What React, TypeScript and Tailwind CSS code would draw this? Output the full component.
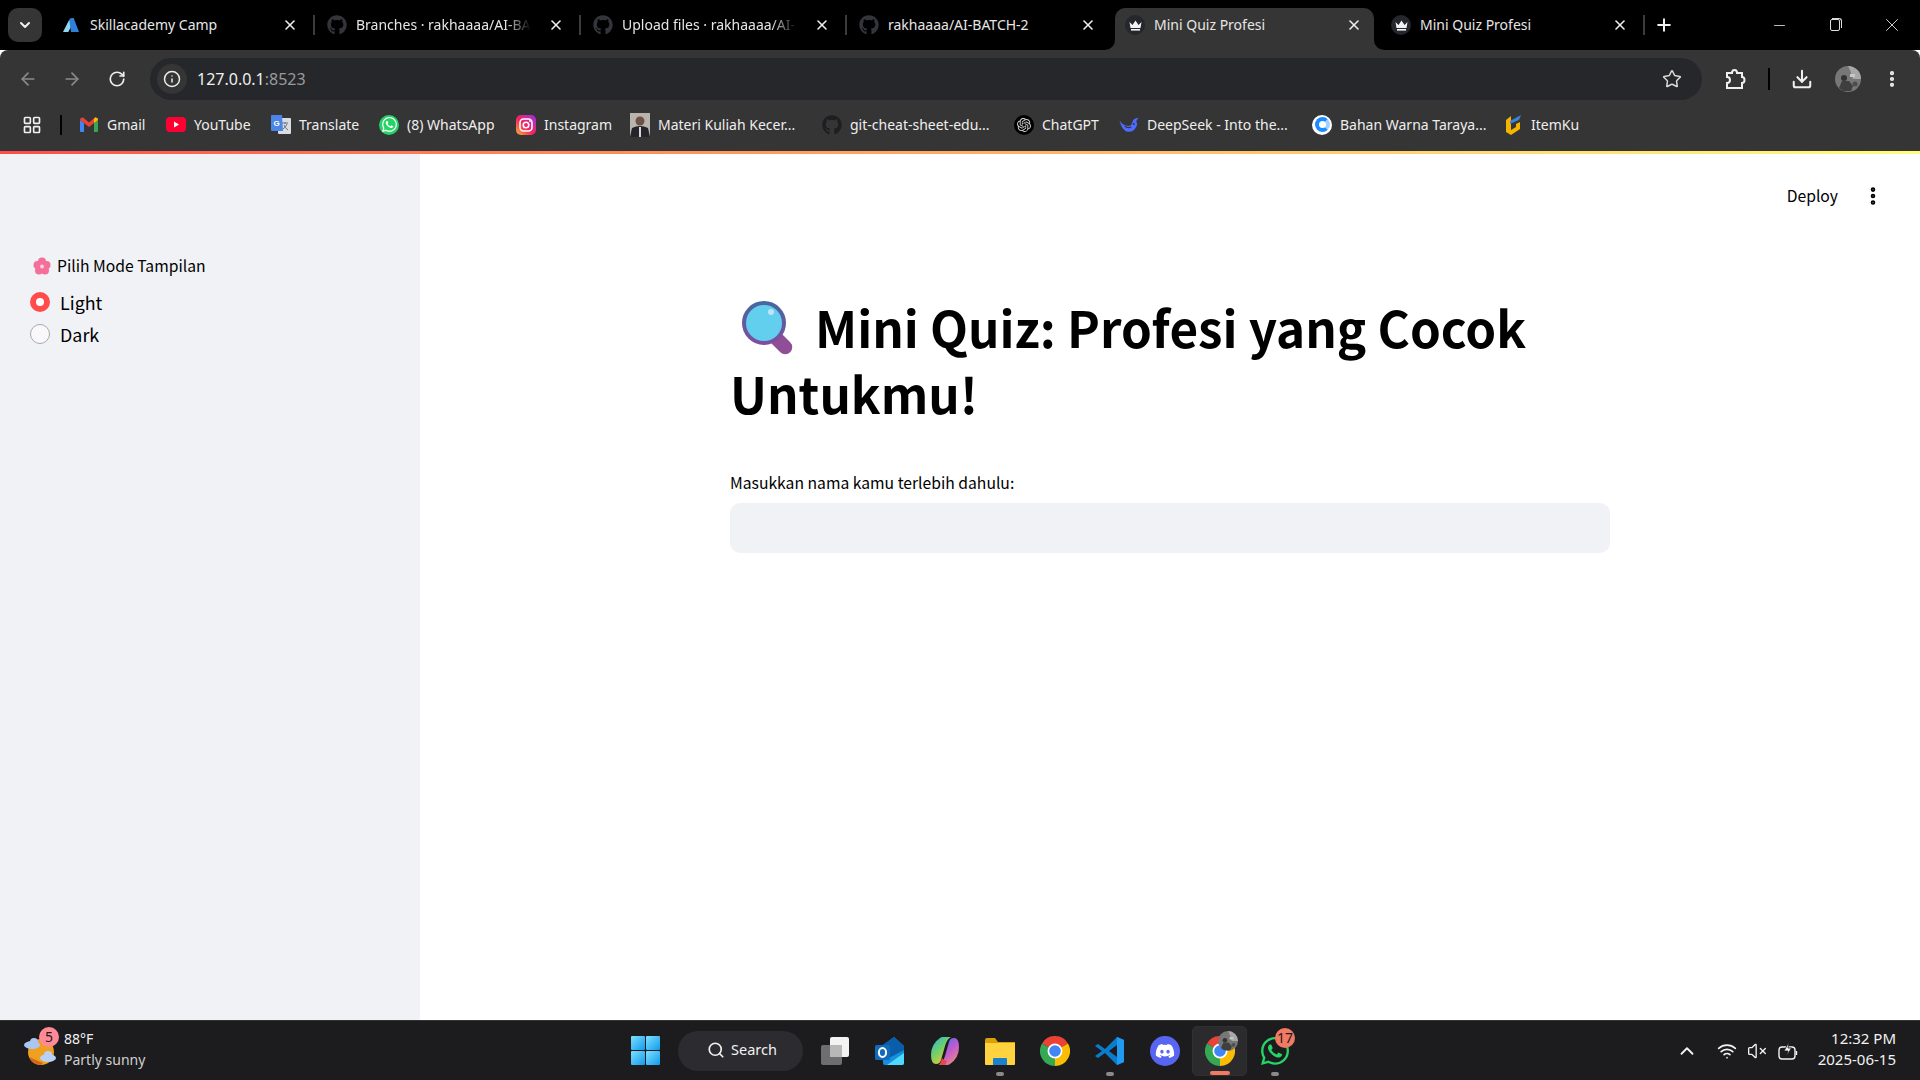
import { ArrowLeft, ArrowRight, ChevronDown, ChevronUp, Download, EllipsisVertical, Info, LayoutGrid, Minus, Plus, RotateCw, Search, Star, VolumeX, Wifi, X } from 'lucide-react';
import { FaDiscord, FaGithub, FaWhatsapp } from 'react-icons/fa';
import { SiOpenai } from 'react-icons/si';
import type { ReactNode } from 'react';

// small drawn logos
function SkillLogo() {
  return (
    <svg width="18" height="16" viewBox="0 0 18 16">
      <path d="M0 16 L7 2 L10 8 L6 16 Z" fill="#8fd8ee" />
      <path d="M7 2 Q8 0 10 0 L12 0 L18 16 L9 16 Z" fill="#2f80d8" />
    </svg>
  );
}

function CrownIcon() {
  return (
    <span className="flex h-[20px] w-[20px] shrink-0 items-center justify-center rounded-full bg-[#25262e]">
      <svg width="13" height="11" viewBox="0 0 13 11">
        <path d="M0.5 2 L3.5 5 L6.5 0.5 L9.5 5 L12.5 2 L11.5 8 L1.5 8 Z" fill="#f2f2f2" />
        <rect x="2" y="9" width="9" height="1.6" fill="#f2f2f2" />
      </svg>
    </span>
  );
}

function GithubTab() {
  return <FaGithub size={20} color="#33353a" className="shrink-0" />;
}

function GithubBookmark() {
  return <FaGithub size={20} color="#1d1e21" className="shrink-0" />;
}

function GmailIcon() {
  return (
    <svg width="18" height="15" viewBox="0 0 18 15">
      <path d="M0 3 L4 6 L4 15 L1 15 Q0 15 0 14 Z" fill="#4285f4" />
      <path d="M18 3 L14 6 L14 15 L17 15 Q18 15 18 14 Z" fill="#34a853" />
      <path d="M0 3 Q0 0 3 0.6 L9 5.5 L15 0.6 Q18 0 18 3 L14 6 L9 10 L4 6 Z" fill="#ea4335" />
      <path d="M14 1.8 L15 0.6 Q18 0 18 3 L14 6 Z" fill="#fbbc04" />
    </svg>
  );
}

function YoutubeIcon() {
  return (
    <svg width="20" height="15" viewBox="0 0 20 15">
      <rect width="20" height="15" rx="4" fill="#ff0033" />
      <path d="M8 4.5 L13 7.5 L8 10.5 Z" fill="#fff" />
    </svg>
  );
}

function TranslateIcon() {
  return (
    <svg width="20" height="20" viewBox="0 0 20 20">
      <rect x="7" y="3" width="13" height="16" rx="1" fill="#d9dde3" />
      <path d="M11 8 H17 M14 7 V9 M12 14 Q15 12 16 9 M13 10 Q14 13 17 15" stroke="#6b7280" strokeWidth="1" fill="none" />
      <path d="M1 0 H11 L12 16 H1 Q0 16 0 15 V1 Q0 0 1 0 Z" fill="#4a86e8" />
      <text x="2.5" y="11" fontSize="8" fontWeight="700" fill="#fff" fontFamily="Liberation Sans, sans-serif">G</text>
    </svg>
  );
}

function WhatsappBookmark() {
  return (
    <span className="flex h-[20px] w-[20px] items-center justify-center rounded-full bg-[#25d366]">
      <FaWhatsapp size={17} color="#fff" />
    </span>
  );
}

function InstagramIcon() {
  return (
    <svg width="20" height="20" viewBox="0 0 20 20">
      <defs>
        <linearGradient id="ig" x1="0" y1="1" x2="1" y2="0">
          <stop offset="0" stopColor="#fdb331" />
          <stop offset="0.45" stopColor="#f4245e" />
          <stop offset="1" stopColor="#9b30e8" />
        </linearGradient>
      </defs>
      <rect width="20" height="20" rx="5" fill="url(#ig)" />
      <rect x="4" y="4" width="12" height="12" rx="3.5" fill="none" stroke="#fff" strokeWidth="1.6" />
      <circle cx="10" cy="10" r="2.8" fill="none" stroke="#fff" strokeWidth="1.6" />
      <circle cx="14" cy="6" r="0.9" fill="#fff" />
    </svg>
  );
}

function PersonThumb() {
  return (
    <svg width="20" height="24" viewBox="0 0 20 24">
      <rect width="20" height="24" fill="#b9b5ae" />
      <circle cx="10" cy="8" r="4.5" fill="#6d5246" />
      <path d="M0 24 L2 15 Q10 11 18 15 L20 24 Z" fill="#23252a" />
      <path d="M9 14 L11 14 L11 24 L9 24 Z" fill="#d8d8d8" />
    </svg>
  );
}

function ChatgptIcon() {
  return (
    <span className="flex h-[20px] w-[20px] items-center justify-center rounded-full bg-black">
      <SiOpenai size={14} color="#d8d8d8" />
    </span>
  );
}

function DeepseekIcon() {
  return (
    <svg width="21" height="16" viewBox="0 0 21 16">
      <path d="M0.5 3 Q4 9 10 9 Q13 9 14 5 Q15 1 20.5 0.5 L18 4 Q20 7 18 10 Q15 16 9 15 Q3 14 0.5 3 Z" fill="#4d6bfe" />
      <path d="M6 9 Q9 12 13 10" stroke="#353535" strokeWidth="1.2" fill="none" />
      <circle cx="15.5" cy="7" r="1" fill="#353535" />
    </svg>
  );
}

function BahanIcon() {
  return (
    <span className="flex h-[20px] w-[20px] items-center justify-center rounded-full bg-white">
      <span className="h-[15px] w-[15px] rounded-full border-[4px] border-[#1a8cff] border-r-[#9fd0ff]" />
    </span>
  );
}

function ItemkuIcon() {
  return (
    <svg width="16" height="22" viewBox="0 0 16 22">
      <path d="M1 6 L6 2 L6 16 L11 13 L11 10 L15 8 L15 15 L6 21 L1 18 Z" fill="#f4b400" />
      <path d="M5 7 L16 1 L14 6 L5 10 Z" fill="#3b82d6" />
    </svg>
  );
}

// grey profile photo, used in the toolbar and on the taskbar
function Avatar({ w, h }: { w: number; h: number }) {
  return (
    <svg width={w} height={h} viewBox="0 0 26 26">
      <circle cx="13" cy="13" r="13" fill="#777777" />
      <path d="M13 0 A13 13 0 0 1 26 13 L18 13 L15 4 Z" fill="#a8a8a8" />
      <circle cx="9" cy="12" r="3" fill="#333333" />
      <path d="M4 22 L7 15 L14 15 L18 20 L16 25 L8 25 Z" fill="#3f3f3f" />
      <rect x="15" y="8" width="5" height="3" fill="#c8c8c8" />
      <circle cx="20" cy="18" r="2.5" fill="#4d4d4d" />
    </svg>
  );
}

function WeatherIcon() {
  return (
    <svg width="36" height="36" viewBox="0 0 36 36">
      <circle cx="18" cy="19" r="13" fill="#f0a020" />
      <path d="M18 32 A13 13 0 0 1 6 24 L20 30 Z" fill="#d4661a" />
      <ellipse cx="9" cy="12" rx="8" ry="4" fill="#a9c7f2" />
      <circle cx="11" cy="9" r="4" fill="#a9c7f2" />
      <ellipse cx="25" cy="25" rx="8" ry="4" fill="#b7d2f7" />
      <circle cx="25" cy="22" r="4" fill="#b7d2f7" />
    </svg>
  );
}

function WindowsIcon() {
  return (
    <svg width="29" height="29" viewBox="0 0 29 29">
      <defs>
        <linearGradient id="win" x1="0" y1="0" x2="1" y2="1">
          <stop offset="0" stopColor="#7fe0ff" />
          <stop offset="1" stopColor="#0f9bea" />
        </linearGradient>
      </defs>
      <rect width="14" height="14" rx="1" fill="url(#win)" />
      <rect x="15" width="14" height="14" rx="1" fill="url(#win)" />
      <rect y="15" width="14" height="14" rx="1" fill="url(#win)" />
      <rect x="15" y="15" width="14" height="14" rx="1" fill="url(#win)" />
    </svg>
  );
}

function TaskViewIcon() {
  return (
    <svg width="30" height="30" viewBox="0 0 30 30">
      <rect x="10" y="1" width="19" height="20" rx="2" fill="#f2f2f2" />
      <rect x="1" y="9" width="21" height="20" rx="2" fill="#6e6e6e" />
      <rect x="10" y="9" width="12" height="12" fill="#b8b8b8" />
    </svg>
  );
}

function OutlookIcon() {
  return (
    <svg width="30" height="30" viewBox="0 0 30 30">
      <path d="M8 9 L19 1 L29 10 L29 27 Q29 29 27 29 L10 29 Q8 29 8 27 Z" fill="#1490df" />
      <path d="M19 1 L29 10 L29 14 L14 22 L8 18 L8 9 Z" fill="#0a5da8" />
      <path d="M12 29 L29 17 L29 27 Q29 29 27 29 Z" fill="#50d9ff" />
      <rect x="0" y="9" width="15" height="15" rx="1.5" fill="#0f6cbd" />
      <ellipse cx="7.5" cy="16.5" rx="3.6" ry="4.4" fill="none" stroke="#fff" strokeWidth="2" />
    </svg>
  );
}

function CopilotIcon() {
  return (
    <svg width="30" height="30" viewBox="0 0 30 30">
      <defs>
        <linearGradient id="cpa" x1="0" y1="0" x2="0.7" y2="1">
          <stop offset="0" stopColor="#25b4e8" />
          <stop offset="0.5" stopColor="#6fd06a" />
          <stop offset="1" stopColor="#f6c42c" />
        </linearGradient>
        <linearGradient id="cpb" x1="0.3" y1="0" x2="1" y2="1">
          <stop offset="0" stopColor="#5a6be8" />
          <stop offset="0.45" stopColor="#c35bd0" />
          <stop offset="1" stopColor="#f79a60" />
        </linearGradient>
      </defs>
      <path d="M10 2 Q11 1 13 1 L21 1 Q17 3 15 10 L11 24 Q10 28 6 28 Q1 28 1 19 Q1 8 10 2 Z" fill="url(#cpa)" />
      <path d="M20 28 Q19 29 17 29 L9 29 Q13 27 15 20 L19 6 Q20 2 24 2 Q29 2 29 11 Q29 22 20 28 Z" fill="url(#cpb)" />
      <path d="M12 22 Q14 25 17 25 L15 29 L9 29 Q11 27 12 22 Z" fill="#e8464e" />
    </svg>
  );
}

function FolderIcon() {
  return (
    <svg width="30" height="30" viewBox="0 0 30 30">
      <path d="M0 4 Q0 2 2 2 L10 2 L13 6 L30 6 L30 12 L0 12 Z" fill="#d9a008" />
      <path d="M0 7 L30 7 L30 28 Q30 29 29 29 L1 29 Q0 29 0 28 Z" fill="#ffd23f" />
      <path d="M9 22 H21 Q22 22 22 23 V29 H8 V23 Q8 22 9 22 Z" fill="#1a80d0" />
    </svg>
  );
}

function ChromeIcon() {
  return (
    <svg width="30" height="30" viewBox="0 0 30 30">
      <path d="M15 15 L2 7.5 A15 15 0 0 1 28 7.5 Z" fill="#ea4335" />
      <path d="M15 15 L28 7.5 A15 15 0 0 1 15 30 Z" fill="#fbbc04" />
      <path d="M15 15 L15 30 A15 15 0 0 1 2 7.5 Z" fill="#34a853" />
      <circle cx="15" cy="15" r="7.5" fill="#fff" />
      <circle cx="15" cy="15" r="5.8" fill="#4285f4" />
    </svg>
  );
}

function VscodeIcon() {
  return (
    <svg width="30" height="30" viewBox="0 0 30 30">
      <path d="M22 1 L29 4 L29 26 L22 29 L10 17 L3 22 L0 20 L7 15 L0 10 L3 8 L10 13 Z" fill="#0a7ccb" />
      <path d="M22 1 L29 4 L29 26 L22 29 Z" fill="#1f9cf0" />
      <path d="M22 9 L14 15 L22 21 Z" fill="#1c1c1f" />
    </svg>
  );
}

function DiscordIcon() {
  return (
    <span className="flex h-[30px] w-[30px] items-center justify-center rounded-full bg-[#5865f2]">
      <FaDiscord size={20} color="#fff" />
    </span>
  );
}

function BatteryIcon() {
  return (
    <svg width="20" height="20" viewBox="0 0 20 20" fill="none" stroke="#f2f2f2" strokeWidth="1.4">
      <rect x="1" y="6" width="16" height="12" rx="3" />
      <path d="M18.5 10 V14" />
      <path d="M11 1 L6 10 H10 L8.5 15 L13.5 7 H10 Z" fill="#f2f2f2" stroke="#1c1c1f" strokeWidth="0.8" />
    </svg>
  );
}

function MagnifierEmoji() {
  return (
    <svg width="58" height="56" viewBox="0 0 58 56">
      <defs>
        <linearGradient id="ring" x1="0" y1="0" x2="0" y2="1">
          <stop offset="0" stopColor="#47689e" />
          <stop offset="1" stopColor="#7d4ea0" />
        </linearGradient>
      </defs>
      <rect x="33" y="30" width="14" height="26" rx="7" transform="rotate(-45 40 43)" fill="#8f4f97" />
      <circle cx="23" cy="23" r="20" fill="#62cfee" stroke="url(#ring)" strokeWidth="4" />
      <circle cx="30" cy="12" r="3" fill="#bfe4f5" />
    </svg>
  );
}

type Tab = { title: string; icon: ReactNode; fade?: boolean; active?: boolean; sep?: boolean };

const tabs: Tab[] = [
  { title: 'Skillacademy Camp', icon: <SkillLogo />, sep: true },
  { title: 'Branches · rakhaaaa/AI-BA', icon: <GithubTab />, fade: true, sep: true },
  { title: 'Upload files · rakhaaaa/AI-', icon: <GithubTab />, fade: true, sep: true },
  { title: 'rakhaaaa/AI-BATCH-2', icon: <GithubTab /> },
  { title: 'Mini Quiz Profesi', icon: <CrownIcon />, active: true },
  { title: 'Mini Quiz Profesi', icon: <CrownIcon />, sep: true },
];

const bookmarks = [
  { label: 'Gmail', icon: <GmailIcon />, width: 'w-[87px]' },
  { label: 'YouTube', icon: <YoutubeIcon />, width: 'w-[105px]' },
  { label: 'Translate', icon: <TranslateIcon />, width: 'w-[108px]' },
  { label: '(8) WhatsApp', icon: <WhatsappBookmark />, width: 'w-[137px]' },
  { label: 'Instagram', icon: <InstagramIcon />, width: 'w-[114px]' },
  { label: 'Materi Kuliah Kecer...', icon: <PersonThumb />, width: 'w-[192px]' },
  { label: 'git-cheat-sheet-edu...', icon: <GithubBookmark />, width: 'w-[192px]' },
  { label: 'ChatGPT', icon: <ChatgptIcon />, width: 'w-[105px]' },
  { label: 'DeepSeek - Into the...', icon: <DeepseekIcon />, width: 'w-[193px]' },
  { label: 'Bahan Warna Taraya...', icon: <BahanIcon />, width: 'w-[191px]' },
  { label: 'ItemKu', icon: <ItemkuIcon />, width: 'w-[90px]' },
];

function TabItem({ tab }: { tab: Tab }) {
  return (
    <div className="relative flex h-[42px] w-[266px] items-center pb-[8px] pl-[8px]">
      {tab.active && (
        <span className="absolute bottom-0 left-[-4px] top-0 w-[259px] rounded-t-[10px] bg-[#353535]">
          <span className="absolute bottom-0 left-[-10px] h-[10px] w-[10px] bg-[#353535]">
            <span className="block h-full w-full rounded-br-[10px] bg-black" />
          </span>
          <span className="absolute bottom-0 right-[-10px] h-[10px] w-[10px] bg-[#353535]">
            <span className="block h-full w-full rounded-bl-[10px] bg-black" />
          </span>
        </span>
      )}
      <span className="relative flex w-[16px] shrink-0 items-center justify-center">{tab.icon}</span>
      <span className={`relative ml-[11px] w-[175px] overflow-hidden whitespace-nowrap text-[14px] leading-[20px] text-[#e6e6e6] ${tab.fade ? '[mask-image:linear-gradient(90deg,#000_85%,transparent)]' : ''}`}>
        {tab.title}
      </span>
      <span className="relative ml-[16px] flex w-[18px] justify-center">
        <X size={16} strokeWidth={2.4} color="#eeeeee" />
      </span>
      {tab.sep && <span className="ml-[14px] h-[20px] w-[2px] bg-[#3c3c3c]" />}
    </div>
  );
}

function TaskbarItem({ children, state }: { children: ReactNode; state?: 'open' | 'active' }) {
  return (
    <div className={`relative flex h-[50px] w-[55px] items-center justify-center rounded-[5px] ${state === 'active' ? 'border border-[#303033] bg-[#2b2b2e]' : ''}`}>
      {children}
      {state === 'open' && <span className="absolute bottom-[0px] h-[4px] w-[8px] rounded-full bg-[#8a8a8a]" />}
      {state === 'active' && <span className="absolute bottom-[0px] h-[4px] w-[20px] rounded-full bg-[#f27a63]" />}
    </div>
  );
}

export default function App() {
  return (
    <div className="flex h-[1080px] w-[1920px] flex-col overflow-hidden bg-white font-['Noto_Sans',sans-serif]">
      {/* tab strip */}
      <div className="flex h-[50px] items-end bg-black">
        <div className="mb-[8px] ml-[8px] flex h-[34px] w-[34px] items-center justify-center rounded-[10px] bg-[#353535]">
          <ChevronDown size={16} strokeWidth={3} color="#f0f0f0" />
        </div>
        <div className="ml-[13px] flex">
          {tabs.map((tab, i) => (
            <TabItem key={i} tab={tab} />
          ))}
        </div>
        <div className="mb-[12px] ml-[3px] flex h-[26px] items-center">
          <Plus size={20} strokeWidth={2.4} color="#f2f2f2" />
        </div>
        <div className="ml-auto flex h-full items-center text-[#dddddd]">
          <span className="flex w-[56px] justify-center"><Minus size={17} strokeWidth={1.2} /></span>
          <span className="relative flex h-[14px] w-[56px] items-center justify-center">
            <span className="h-[12px] w-[10px] rounded-[2px] border border-[#dddddd]" />
            <span className="absolute left-[25px] top-[0px] h-[10px] w-[10px] rounded-tr-[3px] border-r border-t border-[#dddddd]" />
          </span>
          <span className="flex w-[57px] justify-center"><X size={22} strokeWidth={1} /></span>
        </div>
      </div>

      {/* toolbar */}
      <div className="flex h-[50px] items-start rounded-t-[8px] bg-[#353535] pt-[8px]">
        <div className="flex h-[42px] w-[150px] items-center pl-[18px]">
          <ArrowLeft size={20} color="#8b8b8b" />
          <span className="ml-[24px]"><ArrowRight size={20} color="#8b8b8b" /></span>
          <span className="ml-[26px]"><RotateCw size={18} strokeWidth={2.2} color="#eeeeee" /></span>
        </div>
        <div className="flex h-[42px] w-[1552px] items-center rounded-full bg-[#26272a] pl-[7px] pr-[20px]">
          <span className="flex h-[30px] w-[30px] items-center justify-center rounded-full bg-[#353535]">
            <Info size={18} color="#eeeeee" />
          </span>
          <span className="ml-[10px] text-[16px] text-[#f0f0f0]">127.0.0.1<span className="text-[#9a9a9a]">:8523</span></span>
          <span className="ml-auto"><Star size={20} strokeWidth={1.8} color="#d8d8d8" /></span>
        </div>
        <div className="flex h-[42px] flex-1 items-center pl-[22px]">
          <svg width="22" height="22" viewBox="0 0 22 22" fill="none" stroke="#f0f0f0" strokeWidth="2">
            <path d="M3 5 H8 Q8 2 10.5 2 Q13 2 13 5 H18 V9 Q20.5 9 20.5 12 Q20.5 15 18 15 V20 H3 V15 Q6 15 6 12 Q6 9 3 9 Z" />
          </svg>
          <span className="ml-[22px] h-[22px] w-[2px] bg-black" />
          <span className="ml-[21px]"><Download size={22} strokeWidth={2.2} color="#f0f0f0" /></span>
          <span className="ml-[22px] flex"><Avatar w={26} h={26} /></span>
          <span className="ml-[21px]"><EllipsisVertical size={20} strokeWidth={3} color="#f0f0f0" /></span>
        </div>
      </div>

      {/* bookmarks */}
      <div className="flex h-[51px] items-center bg-[#353535] pb-[2px] pl-[22px]">
        <LayoutGrid size={20} strokeWidth={2} color="#f0f0f0" />
        <span className="ml-[18px] h-[20px] w-[2px] bg-black" />
        <div className="ml-[17px] flex">
          {bookmarks.map((b) => (
            <div key={b.label} className={`flex items-center ${b.width}`}>
              <span className="flex w-[20px] justify-center">{b.icon}</span>
              <span className="ml-[8px] whitespace-nowrap text-[14px] leading-[20px] text-[#eeeeee]">{b.label}</span>
            </div>
          ))}
        </div>
      </div>

      {/* streamlit decoration */}
      <div className="h-[3px] bg-gradient-to-r from-[#ff4b4b] to-[#fffd80]" />

      <div className="flex min-h-0 flex-1 font-['Noto_Sans_CJK_SC',sans-serif] text-black">
        <aside className="w-[420px] bg-[#f0f2f6] pl-[30px] pt-[100px]">
          <div className="flex items-center text-[15.7px] leading-[24px]">
            <svg width="18" height="18" viewBox="0 0 18 18" className="ml-[3px] mr-[6px]">
              <g fill="#f4709a">
                <circle cx="9" cy="4.5" r="4" />
                <circle cx="13.5" cy="8" r="4" />
                <circle cx="12" cy="13.5" r="4" />
                <circle cx="6" cy="13.5" r="4" />
                <circle cx="4.5" cy="8" r="4" />
              </g>
              <circle cx="9" cy="9.5" r="2" fill="#fbd0df" />
            </svg>
            <span>Pilih Mode Tampilan</span>
          </div>
          <div className="mt-[8px] flex h-[32px] items-center text-[17.9px]">
            <span className="flex h-[20px] w-[20px] items-center justify-center rounded-full bg-[#ff4b4b]">
              <span className="h-[8px] w-[8px] rounded-full bg-white" />
            </span>
            <span className="ml-[10px]">Light</span>
          </div>
          <div className="flex h-[32px] items-center text-[17.9px]">
            <span className="h-[20px] w-[20px] rounded-full border border-[#a8a8ae] bg-[#f9f9fc]" />
            <span className="ml-[10px]">Dark</span>
          </div>
        </aside>

        <main className="min-w-0 flex-1">
          <div className="flex h-[84px] items-center justify-end pr-[35px]">
            <span className="text-[15.7px]">Deploy</span>
            <span className="ml-[23px] flex w-[24px] justify-center">
              <EllipsisVertical size={22} strokeWidth={3} color="#000000" />
            </span>
          </div>
          <div className="ml-[310px] w-[880px] pt-[56px]">
            <h1 className="text-[49.4px] font-bold leading-[66px] tracking-[0]">
              <span className="mr-[16px] inline-block pl-[11px] align-[-8px]"><MagnifierEmoji /></span>
              Mini Quiz: Profesi yang Cocok Untukmu!
            </h1>
            <p className="mt-[45px] text-[15.7px] leading-[24px]">Masukkan nama kamu terlebih dahulu:</p>
            <div className="mt-[8px] h-[50px] rounded-[10px] bg-[#f0f2f6]" />
          </div>
        </main>
      </div>

      {/* windows taskbar */}
      <div className="flex h-[60px] items-center border-t border-[#333333] bg-[#1c1c1f] text-[#f2f2f2]">
        <div className="flex w-[618px] items-center pl-[23px]">
          <div className="relative h-[36px] w-[36px]">
            <WeatherIcon />
            <span className="absolute left-[16px] top-[-6px] flex h-[20px] w-[20px] items-center justify-center rounded-full bg-[#ff8a95] text-[14px] text-[#1c1c1f]">5</span>
          </div>
          <div className="ml-[5px] pb-[3px] text-[14px] leading-[21px]">
            <div>88°F</div>
            <div className="text-[#d0d0d0]">Partly sunny</div>
          </div>
        </div>
        <div className="flex w-[55px] justify-center"><WindowsIcon /></div>
        <div className="ml-[5px] flex h-[40px] w-[125px] items-center rounded-full bg-[#2c2c30] pb-[1px] pl-[29px]">
          <Search size={18} strokeWidth={2.2} color="#f2f2f2" />
          <span className="ml-[6px] text-[14.5px]">Search</span>
        </div>
        <div className="ml-[4px] flex items-center">
          <TaskbarItem><TaskViewIcon /></TaskbarItem>
          <TaskbarItem><OutlookIcon /></TaskbarItem>
          <TaskbarItem><CopilotIcon /></TaskbarItem>
          <TaskbarItem state="open"><FolderIcon /></TaskbarItem>
          <TaskbarItem><ChromeIcon /></TaskbarItem>
          <TaskbarItem state="open"><VscodeIcon /></TaskbarItem>
          <TaskbarItem><DiscordIcon /></TaskbarItem>
          <TaskbarItem state="active">
            <ChromeIcon />
            <span className="absolute right-[8px] top-[3px] flex"><Avatar w={20} h={22} /></span>
          </TaskbarItem>
          <TaskbarItem state="open">
            <FaWhatsapp size={32} color="#25d366" />
            <span className="absolute right-[7px] top-[2px] flex h-[20px] w-[20px] items-center justify-center rounded-full bg-[#f27a63] text-[14px] text-[#1c1c1f]">17</span>
          </TaskbarItem>
        </div>
        <div className="ml-auto flex items-center pr-[24px]">
          <span className="flex w-[30px] justify-center"><ChevronUp size={22} strokeWidth={2} /></span>
          <span className="ml-[10px] flex w-[30px] justify-center"><Wifi size={20} strokeWidth={2} /></span>
          <span className="flex w-[30px] justify-center"><VolumeX size={20} strokeWidth={1.6} /></span>
          <span className="flex w-[31px] justify-center"><BatteryIcon /></span>
          <div className="w-[93px] pb-[3px] text-right text-[15px] leading-[21px]">
            <div>12:32 PM</div>
            <div>2025-06-15</div>
          </div>
        </div>
      </div>
    </div>
  );
}
